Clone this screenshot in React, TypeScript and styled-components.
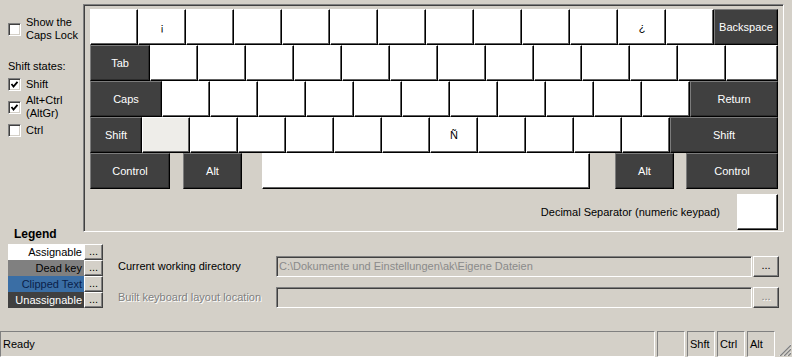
import styled, { createGlobalStyle } from 'styled-components';

type Tone = 'white' | 'dark' | 'pale';

interface KeyDef {
  label?: string;
  w?: number;
  tone?: Tone;
  ml?: number;
}

const plain = (n: number, labels: Record<number, string> = {}): KeyDef[] =>
  Array.from({ length: n }, (_, i) => ({ label: labels[i] }));

const rows: KeyDef[][] = [
  [...plain(13, { 1: '¡', 11: '¿' }), { label: 'Backspace', w: 64, tone: 'dark' }],
  [{ label: 'Tab', w: 60, tone: 'dark' }, ...plain(12), { w: 52 }],
  [{ label: 'Caps', w: 72, tone: 'dark' }, ...plain(11), { label: 'Return', w: 88, tone: 'dark' }],
  [
    { label: 'Shift', w: 52, tone: 'dark' },
    { tone: 'pale' },
    ...plain(10, { 5: 'Ñ' }),
    { label: 'Shift', w: 108, tone: 'dark' },
  ],
  [
    { label: 'Control', w: 80, tone: 'dark' },
    { label: 'Alt', w: 59, tone: 'dark', ml: 13 },
    { w: 328, ml: 20 },
    { label: 'Alt', w: 59, tone: 'dark', ml: 25 },
    { label: 'Control', w: 92, tone: 'dark', ml: 12 },
  ],
];

const legend = [
  { label: 'Assignable', bg: '#ffffff', fg: '#000000' },
  { label: 'Dead key', bg: '#808080', fg: '#000000' },
  { label: 'Clipped Text', bg: '#3a6ea5', fg: '#0a1f4a' },
  { label: 'Unassignable', bg: '#404040', fg: '#ffffff' },
];

const CheckMark = () => (
  <svg width="9" height="9" viewBox="0 0 9 9">
    <polyline points="1.5,4 3.5,6.5 7.5,1.8" fill="none" stroke="#000" strokeWidth="1.8" />
  </svg>
);

const Grip = () => (
  <svg width="13" height="13" viewBox="0 0 13 13">
    {[0, 4, 8].map((o) => (
      <g key={o}>
        <line x1={13} y1={1 + o} x2={1 + o} y2={13} stroke="#fff" strokeWidth="1" />
        <line x1={13} y1={2 + o} x2={2 + o} y2={13} stroke="#808080" strokeWidth="1.4" />
      </g>
    ))}
  </svg>
);

const App = () => {
  return (
    <Page>
      <GlobalStyle />
      <Top>
        <Sidebar>
          <CheckItem $mt={12}>
            <Box />
            <span>
              Show the
              <br />
              Caps Lock
            </span>
          </CheckItem>
          <Caption>Shift states:</Caption>
          <CheckItem $mt={5}>
            <Box>
              <CheckMark />
            </Box>
            <span>Shift</span>
          </CheckItem>
          <CheckItem $mt={3}>
            <Box>
              <CheckMark />
            </Box>
            <span>
              Alt+Ctrl
              <br />
              (AltGr)
            </span>
          </CheckItem>
          <CheckItem $mt={4}>
            <Box />
            <span>Ctrl</span>
          </CheckItem>
        </Sidebar>
        <KeyboardPanel>
          {rows.map((row, r) => (
            <KeyRow key={r}>
              {row.map((k, i) => (
                <Key key={i} $w={k.w ?? 48} $tone={k.tone ?? 'white'} $ml={k.ml ?? 0}>
                  {k.label}
                </Key>
              ))}
            </KeyRow>
          ))}
          <DecimalRow>
            <span>Decimal Separator (numeric keypad)</span>
            <Key $w={41} $tone="white" $ml={0} />
          </DecimalRow>
        </KeyboardPanel>
      </Top>
      <Bottom>
        <LegendCol>
          <LegendTitle>Legend</LegendTitle>
          {legend.map((l) => (
            <LegendRow key={l.label}>
              <Swatch $bg={l.bg} $fg={l.fg}>
                {l.label}
              </Swatch>
              <SmallButton>...</SmallButton>
            </LegendRow>
          ))}
        </LegendCol>
        <Form>
          <FieldLabel>Current working directory</FieldLabel>
          <Field>C:\Dokumente und Einstellungen\ak\Eigene Dateien</Field>
          <BrowseButton>...</BrowseButton>
          <FieldLabel $disabled>Built keyboard layout location</FieldLabel>
          <Field />
          <BrowseButton $disabled>...</BrowseButton>
        </Form>
      </Bottom>
      <StatusBar>
        <StatusPanel $grow>Ready</StatusPanel>
        <StatusPanel />
        <StatusPanel>Shft</StatusPanel>
        <StatusPanel>Ctrl</StatusPanel>
        <StatusPanel>Alt</StatusPanel>
        <GripBox>
          <Grip />
        </GripBox>
      </StatusBar>
    </Page>
  );
};

const GlobalStyle = createGlobalStyle`
  html, body {
    margin: 0;
    background: #d4d0c8;
  }
  body {
    font-family: "Liberation Sans", Arial, sans-serif;
    font-size: 11px;
    color: #000;
  }
`;

const Page = styled.div`
  width: 792px;
  height: 357px;
  display: flex;
  flex-direction: column;
  overflow: hidden;
  background: #d4d0c8;
`;

const Top = styled.div`
  display: flex;
  margin-top: 4px;
`;

const Sidebar = styled.div`
  width: 83px;
  box-sizing: border-box;
  padding-left: 8px;
  display: flex;
  flex-direction: column;
  line-height: 13px;
`;

const CheckItem = styled.div<{ $mt: number }>`
  display: flex;
  align-items: center;
  gap: 5px;
  margin-top: ${(p) => p.$mt}px;
`;

const Box = styled.span`
  width: 13px;
  height: 13px;
  box-sizing: border-box;
  flex-shrink: 0;
  background: #fff;
  border: 1px solid;
  border-color: #808080 #fff #fff #808080;
  box-shadow: inset 1px 1px 0 #404040, inset -1px -1px 0 #d4d0c8;
  display: flex;
  align-items: center;
  justify-content: center;
`;

const Caption = styled.div`
  margin-top: 18px;
`;

const KeyboardPanel = styled.div`
  width: 701px;
  height: 228px;
  box-sizing: border-box;
  padding: 4px 5px 1px 6px;
  border: 1px solid;
  border-color: #808080 #fff #fff #808080;
  box-shadow: inset 1px 1px 0 #404040, inset -1px -1px 0 #d4d0c8;
`;

const KeyRow = styled.div`
  display: flex;
  height: 36px;
`;

const Key = styled.div<{ $w: number; $tone: Tone; $ml: number }>`
  width: ${(p) => p.$w}px;
  height: 36px;
  margin-left: ${(p) => p.$ml}px;
  box-sizing: border-box;
  flex-shrink: 0;
  display: flex;
  align-items: center;
  justify-content: center;
  background: ${(p) => (p.$tone === 'dark' ? '#404040' : p.$tone === 'pale' ? '#eeede9' : '#ffffff')};
  color: ${(p) => (p.$tone === 'dark' ? '#ffffff' : '#000000')};
  border: 1px solid;
  border-color: ${(p) => (p.$tone === 'dark' ? '#7c7c7c #000 #000 #7c7c7c' : '#fff #000 #000 #fff')};
  box-shadow: inset -1px -1px 0 ${(p) => (p.$tone === 'dark' ? '#2c2c2c' : '#606060')};
`;

const DecimalRow = styled.div`
  display: flex;
  justify-content: flex-end;
  align-items: center;
  gap: 17px;
  margin-top: 5px;
`;

const Bottom = styled.div`
  display: flex;
`;

const LegendCol = styled.div`
  padding-left: 8px;
  width: 95px;
`;

const LegendTitle = styled.div`
  margin-top: -4px;
  margin-bottom: 4px;
  padding-left: 6px;
  line-height: 12px;
  font-weight: bold;
  font-size: 12px;
`;

const LegendRow = styled.div`
  display: flex;
  height: 16px;
`;

const Swatch = styled.div<{ $bg: string; $fg: string }>`
  width: 76px;
  box-sizing: border-box;
  padding-right: 2px;
  text-align: right;
  line-height: 16px;
  white-space: nowrap;
  overflow: hidden;
  background: ${(p) => p.$bg};
  color: ${(p) => p.$fg};
`;

const SmallButton = styled.div`
  width: 19px;
  box-sizing: border-box;
  background: #d4d0c8;
  border: 1px solid;
  border-color: #fff #404040 #404040 #fff;
  box-shadow: inset -1px -1px 0 #808080;
  text-align: center;
  line-height: 12px;
`;

const Form = styled.div`
  margin-left: 15px;
  margin-top: 24px;
  width: 661px;
  display: grid;
  grid-template-columns: 158px 1fr 27px;
  grid-auto-rows: 21px;
  row-gap: 10px;
`;

const FieldLabel = styled.div<{ $disabled?: boolean }>`
  line-height: 21px;
  color: ${(p) => (p.$disabled ? '#808080' : '#000')};
  text-shadow: ${(p) => (p.$disabled ? '1px 1px 0 #fff' : 'none')};
`;

const Field = styled.div`
  box-sizing: border-box;
  background: #d4d0c8;
  border: 1px solid;
  border-color: #808080 #fff #fff #808080;
  box-shadow: inset 1px 1px 0 #404040, inset -1px -1px 0 #d4d0c8;
  color: #8a8a8a;
  padding-left: 2px;
  line-height: 19px;
  white-space: nowrap;
  overflow: hidden;
`;

const BrowseButton = styled.div<{ $disabled?: boolean }>`
  margin-left: 1px;
  box-sizing: border-box;
  background: #d4d0c8;
  border: 1px solid;
  border-color: #fff #404040 #404040 #fff;
  box-shadow: inset -1px -1px 0 #808080;
  text-align: center;
  line-height: 17px;
  color: ${(p) => (p.$disabled ? '#808080' : '#000')};
  text-shadow: ${(p) => (p.$disabled ? '1px 1px 0 #fff' : 'none')};
`;

const StatusBar = styled.div`
  margin-top: auto;
  height: 26px;
  display: flex;
  gap: 2px;
  align-items: stretch;
`;

const StatusPanel = styled.div<{ $grow?: boolean }>`
  width: ${(p) => (p.$grow ? '655px' : '28px')};
  box-sizing: border-box;
  border: 1px solid;
  border-color: #808080 #fff #fff #808080;
  padding: 0 2px;
  line-height: 24px;
  white-space: nowrap;
  overflow: hidden;
`;

const GripBox = styled.div`
  flex: 1;
  display: flex;
  align-items: flex-end;
  justify-content: flex-end;
  padding: 0 1px 1px 0;
`;

export default App;
